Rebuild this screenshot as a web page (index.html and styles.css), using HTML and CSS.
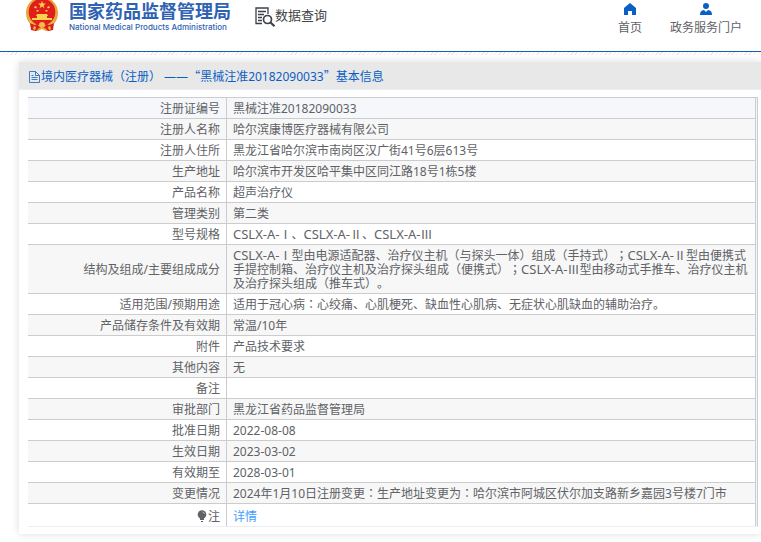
FILE: index.html
```html
<!DOCTYPE html>
<html lang="zh-CN">
<head>
<meta charset="utf-8">
<title>数据查询</title>
<link rel="stylesheet" href="styles.css">
</head>
<body>
<header class="top">
  <svg class="emblem" viewBox="0 0 32 32" aria-hidden="true">
    <path fill="#e9a63a" d="M16-3C7-3 0 4 0 13c0 5 2 9 5 12l1 5 6 1 4-2 4 2 6-1 1-5c3-3 5-7 5-12C32 4 25-3 16-3z"/>
    <path fill="#f6cf62" d="M3 19c2 4 5 6 10 6h6c5 0 8-2 10-6l-2 6-5 3H10l-5-3z"/>
    <circle cx="16" cy="12" r="13.300" fill="#e01f1c"/>
    <path fill="#f8d24c" d="M16 1l1 2.600h2.800l-2.200 1.800.8 2.800L16 6.600l-2.400 1.600.8-2.800-2.200-1.800H15zM9 6l2 1-1 1.500-2-1zM23 6l-2 1 1 1.500 2-1zM10.500 10h2v1.500h-2zM19.500 10h2v1.500h-2z"/>
    <path fill="#f8d24c" d="M11 14h10l1 2h-1v2h5v2H6v-2h5v-2h-1z"/>
    <path fill="#d9201c" d="M4 23l5 2 2-1 2 2h6l2-2 2 1 5-2-1 7-5 1-3-3h-6l-3 3-5-1z"/>
    <circle cx="16" cy="25" r="3" fill="#f3bd45"/>
    <path fill="#f3bd45" d="M8 26l2 1-1 3-2-1zM24 26l-2 1 1 3 2-1z"/>
  </svg>
  <div class="brand">
    <span class="brand-cn">国家药品监督管理局</span>
    <span class="brand-en">National Medical Products Administration</span>
  </div>
  <div class="query">
    <svg class="query-icon" viewBox="0 0 20 20" fill="none" stroke="#3c3f4c" aria-hidden="true">
      <path stroke-width="1.300" d="M7 16.500H1V1h12v6M3 4.500h8M3 7.500h6M3 10.500h4M3 13.500h4"/>
      <circle cx="12.500" cy="12.500" r="4" stroke-width="1.700"/>
      <path stroke-width="2.200" d="M15.500 15.500l4 3.700"/>
    </svg>
    <span>数据查询</span>
  </div>
  <nav class="nav">
    <a href="#">
      <svg viewBox="0 0 12 12" aria-hidden="true"><path fill="#0a5fc4" d="M6 0l6 5v7H8V8H4v4H0V5z"/></svg>
      首页
    </a>
    <a href="#">
      <svg viewBox="0 0 12 12" aria-hidden="true"><circle cx="6" cy="3" r="3" fill="#0a5fc4"/><path fill="#0a5fc4" d="M0 12c0-3 1-4.500 4-5l2 2 2-2c3 .5 4 2 4 5z"/></svg>
      政务服务门户
    </a>
  </nav>
</header>
<div class="hatch"></div>
<main class="card">
  <h1 class="card-head">
    <svg viewBox="0 0 11 12" fill="none" stroke="#0a5fc4" aria-hidden="true"><path stroke-width=".8" d="M.5.5h6l4 4v7H.5zM6.500.5v4h4M2.500 4.500h2M2.500 6.500h6M2.500 8.500h6"/></svg>
    <span>境内医疗器械（注册） ——<span class="wide">“</span>黑械注准20182090033<span class="wide">”</span>基本信息</span>
  </h1>
  <div class="card-body">
    <div class="frame">
      <table class="info">
        <tr class="active"><th scope="row">注册证编号</th><td>黑械注准20182090033</td></tr>
        <tr><th scope="row">注册人名称</th><td>哈尔滨康博医疗器械有限公司</td></tr>
        <tr><th scope="row">注册人住所</th><td>黑龙江省哈尔滨市南岗区汉广街41号6层613号</td></tr>
        <tr><th scope="row">生产地址</th><td>哈尔滨市开发区哈平集中区同江路18号1栋5楼</td></tr>
        <tr><th scope="row">产品名称</th><td>超声治疗仪</td></tr>
        <tr><th scope="row">管理类别</th><td>第二类</td></tr>
        <tr><th scope="row">型号规格</th><td><span class="model">CSLX-A-</span><span class="wide">Ⅰ</span>、<span class="model">CSLX-A-</span><span class="wide">Ⅱ</span>、<span class="model">CSLX-A-</span><span class="wide">Ⅲ</span></td></tr>
        <tr><th scope="row">结构及组成/主要组成成分</th><td><span class="model">CSLX-A-</span><span class="wide">Ⅰ</span>型由电源适配器、治疗仪主机（与探头一体）组成（手持式）<span class="mid" lang="zh-TW">；</span><span class="model">CSLX-A-</span><span class="wide">Ⅱ</span>型由便携式手提控制箱、治疗仪主机及治疗探头组成（便携式）<span class="mid" lang="zh-TW">；</span><span class="model">CSLX-A-</span><span class="wide">Ⅲ</span>型由移动式手推车、治疗仪主机及治疗探头组成（推车式）。</td></tr>
        <tr><th scope="row">适用范围/预期用途</th><td>适用于冠心病<span class="mid" lang="zh-TW">：</span>心绞痛、心肌梗死、缺血性心肌病、无症状心肌缺血的辅助治疗。</td></tr>
        <tr><th scope="row">产品储存条件及有效期</th><td>常温/10年</td></tr>
        <tr><th scope="row">附件</th><td>产品技术要求</td></tr>
        <tr><th scope="row">其他内容</th><td>无</td></tr>
        <tr><th scope="row">备注</th><td></td></tr>
        <tr><th scope="row">审批部门</th><td>黑龙江省药品监督管理局</td></tr>
        <tr><th scope="row">批准日期</th><td>2022-08-08</td></tr>
        <tr><th scope="row">生效日期</th><td>2023-03-02</td></tr>
        <tr><th scope="row">有效期至</th><td>2028-03-01</td></tr>
        <tr><th scope="row">变更情况</th><td>2024年1月10日注册变更<span class="mid" lang="zh-TW">：</span>生产地址变更为<span class="mid" lang="zh-TW">：</span>哈尔滨市阿城区伏尔加支路新乡嘉园3号楼7门市</td></tr>
        <tr class="last"><th scope="row"><svg class="bulb" viewBox="0 0 10 12" aria-hidden="true"><circle cx="5" cy="4.500" r="4.300" fill="#606266"/><path fill="#606266" d="M3 8h4v2H3zM4 11h2v1H4z"/><path d="M5.500 2c1 .2 1.700.8 2 2" fill="none" stroke="#ccc" stroke-width=".8"/></svg>注</th><td><a href="#">详情</a></td></tr>
      </table>
    </div>
  </div>
</main>
</body>
</html>
```
FILE: styles.css
```css
* { box-sizing: border-box; }

body {
  min-height: 100vh;
  margin: 0;
  background: #fff;
  color: #606266;
  font-family: "Noto Sans", "Noto Sans CJK SC", sans-serif;
  font-size: 12px;
  line-height: 14px;
  text-spacing-trim: space-all;
}

a { text-decoration: none; }

.top {
  display: flex;
  align-items: flex-start;
  height: 52px;
  padding: 0 19px 0 26px;
  border-bottom: 1px solid #0f5ebc;
}

.emblem { width: 32px; height: 32px; }

.brand {
  display: flex;
  flex-direction: column;
  margin-left: 11px;
  color: #2f62b3;
  white-space: nowrap;
}

.brand-cn {
  font-family: "Noto Sans CJK SC", sans-serif;
  font-size: 18px;
  font-weight: 700;
  line-height: 21px;
}

.brand-en {
  font-family: Inter, sans-serif;
  font-size: 8px;
  font-weight: 500;
  line-height: 12px;
}

.query {
  display: flex;
  margin-left: 24px;
  padding-top: 7px;
  color: #444;
  font-size: 13px;
  line-height: 16px;
}

.query-icon { width: 20px; height: 20px; }

.nav {
  display: flex;
  gap: 28px;
  margin-left: auto;
  padding-top: 3px;
}

.nav a {
  display: flex;
  flex-direction: column;
  align-items: center;
  gap: 6px;
  color: #606266;
}

.nav svg { width: 12px; height: 12px; }

.hatch {
  height: 3px;
  background: repeating-linear-gradient(135deg, #ececec 0 1px, #fff 1px 3px);
}

.card {
  margin: 7px 0 0 19px;
  background: #fff;
  box-shadow: 0 0 8px rgba(0, 0, 0, 0.14);
}

.card-head {
  display: flex;
  align-items: center;
  gap: 1px;
  height: 28px;
  margin: 0;
  padding: 2px 0 0 10px;
  border-bottom: 1px solid #ebeef5;
  background: #e8e8e8;
  color: #0a5fc4;
  font-size: 12px;
  font-weight: 400;
}

.card-head svg { width: 11px; height: 12px; }

.wide,
.mid,
.model { line-height: 0; }

.wide { font-family: "Noto Sans CJK SC", sans-serif; }

.mid { font-family: "Noto Sans CJK TC", sans-serif; }

.model { font-size: 13px; }

.card-body { padding: 7px 3px 7px 9px; }

.frame {
  padding-right: 1px;
  border-top: 1px solid #ccc;
  border-right: 1px solid #ccccd2;
  border-bottom: 1px solid #ebeef5;
  background: #f3f4f9;
}

.info {
  width: 100%;
  border-spacing: 0;
  border-right: 1px solid #ccccd2;
  background: #fff;
}

.info th,
.info td {
  padding: 4px 6px 2px;
  border-bottom: 1px solid #ccc;
  font-weight: 400;
}

.info th {
  width: 198px;
  text-align: right;
}

.info td {
  height: 21px;
  border-left: 1px solid #ccc;
  text-align: left;
}

.info tr:nth-child(even) { background: #f7f7f7; }

.info .active { background: #f5f7fa; }

.info .last th,
.info .last td {
  height: 22px;
  padding: 5px 6px 2px;
  border-bottom: 0;
}

.info a { color: #409eff; }

.bulb {
  width: 10px;
  height: 12px;
  margin-right: 1px;
  vertical-align: -1px;
}
```
